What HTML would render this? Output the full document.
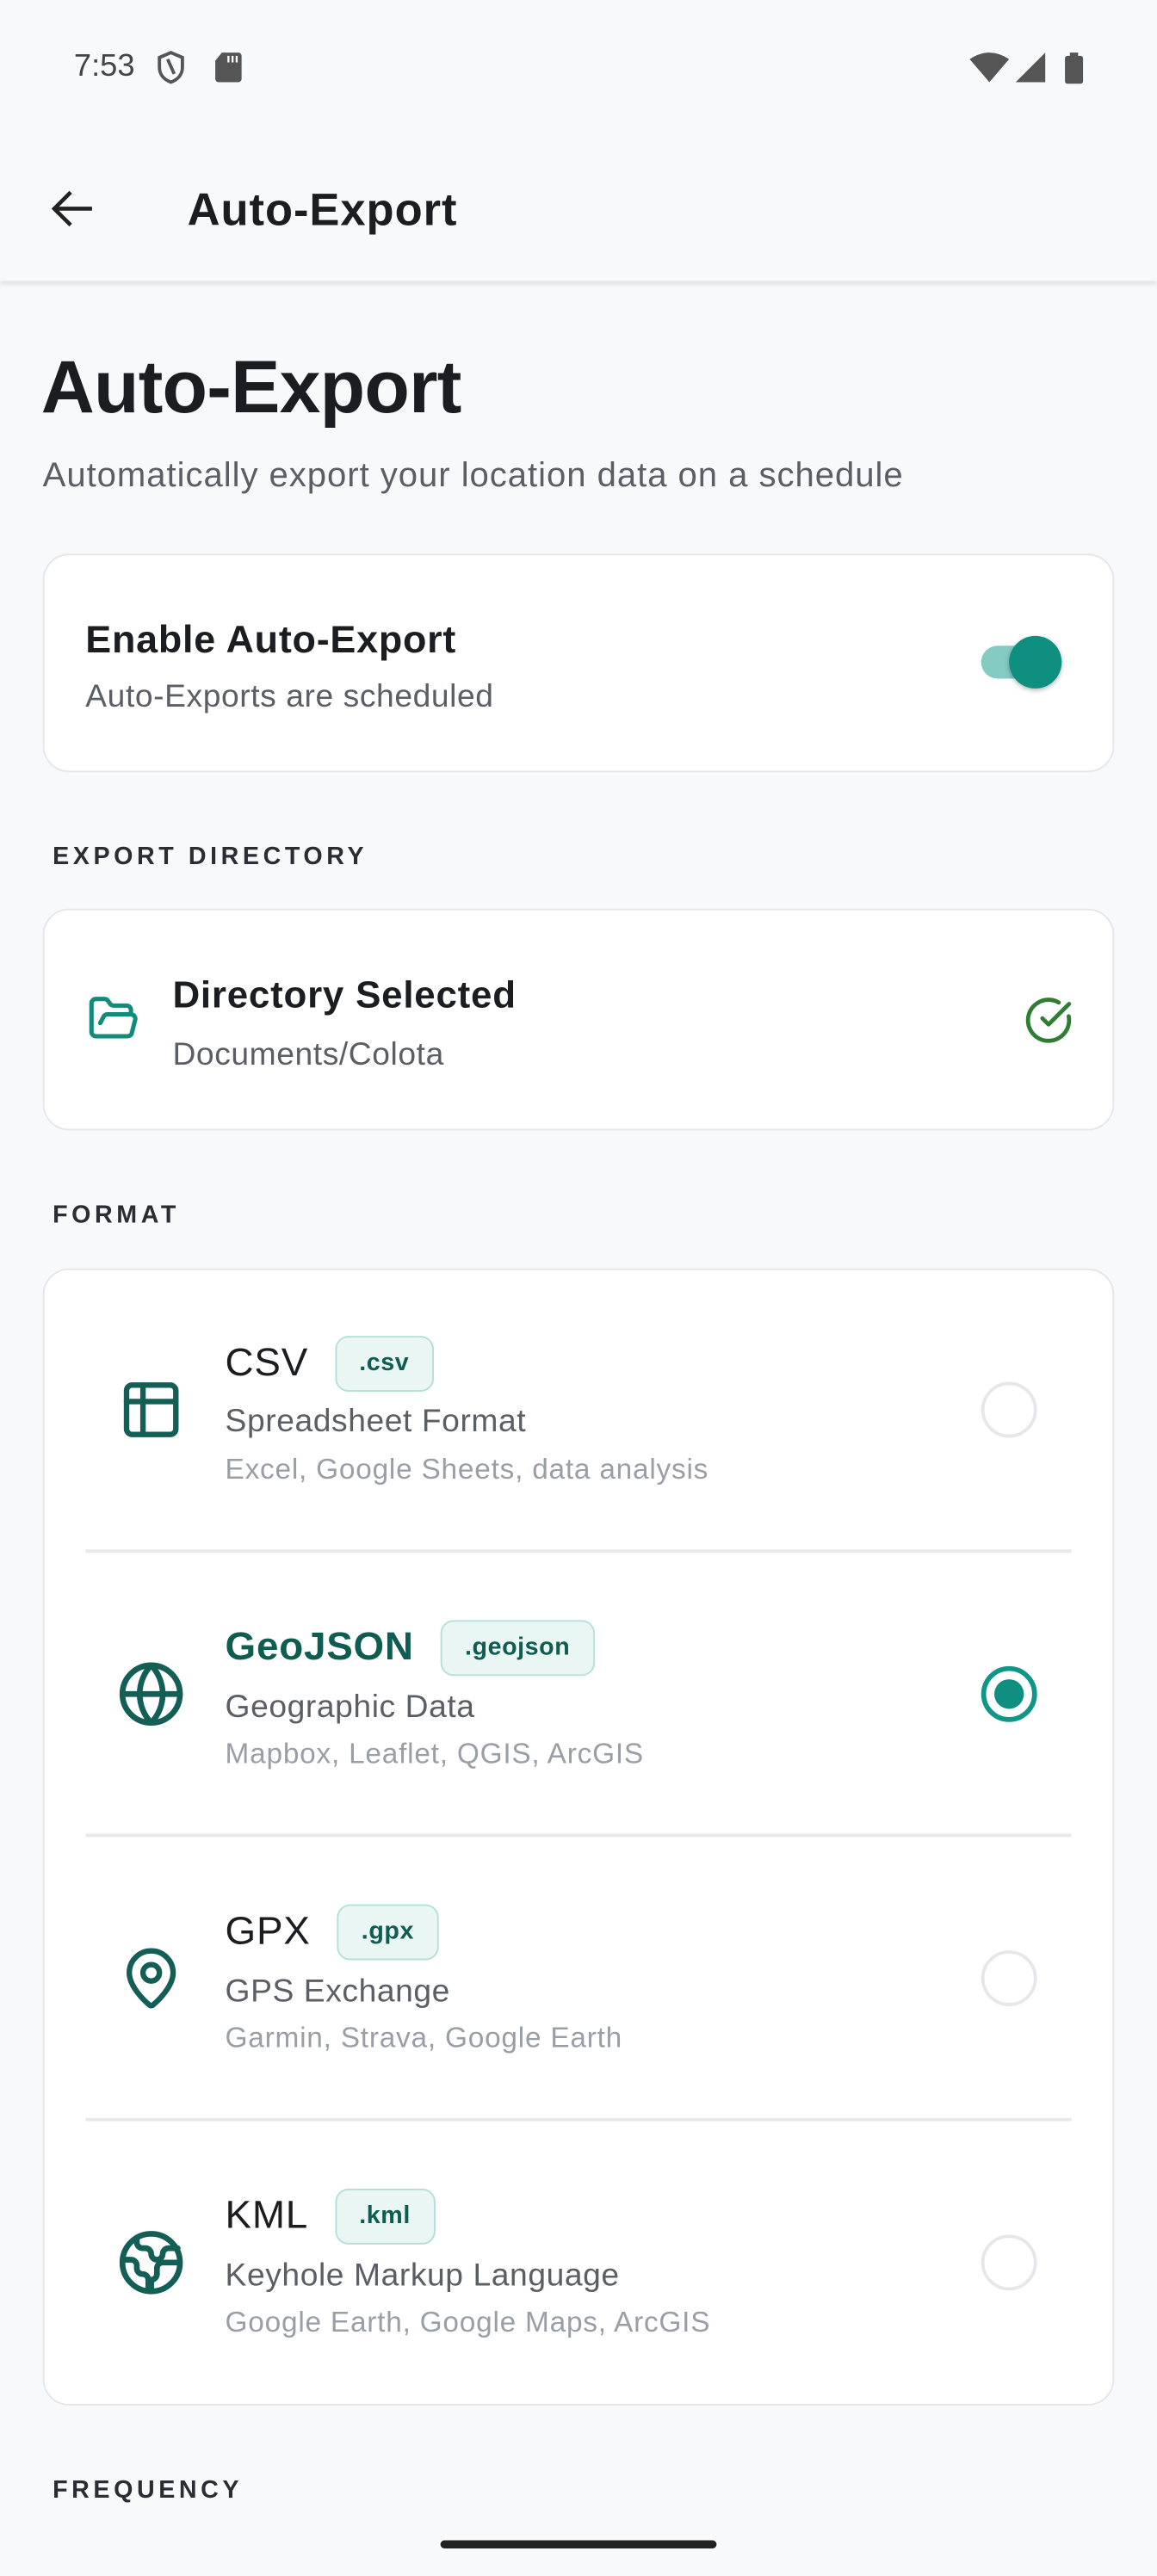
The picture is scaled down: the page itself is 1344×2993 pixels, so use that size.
<!DOCTYPE html>
<html><head><meta charset="utf-8"><style>
html,body{margin:0;padding:0;background:#f8f9fb;}
body{width:1344px;height:2992px;overflow:hidden;font-family:"Liberation Sans",sans-serif;}
#w{position:absolute;left:0;top:0;width:704px;height:1568px;transform:scale(1.909091);transform-origin:0 0;}
.a{position:absolute;white-space:nowrap;}
.card{position:absolute;left:26px;width:652px;background:#fff;border:1.5px solid #e4e6ea;border-radius:16px;box-sizing:border-box;}
.lbl{position:absolute;left:32px;font-size:15px;font-weight:bold;letter-spacing:2.4px;color:#2a2d33;line-height:18px;}
.t{font-size:23px;color:#1c1d21;line-height:28px;letter-spacing:0.4px;}
.s{font-size:19.5px;color:#5b5e65;line-height:24px;letter-spacing:0.3px;}
.x{font-size:17.5px;color:#9a9ea6;line-height:20px;letter-spacing:0.4px;}
.badge{display:inline-block;vertical-align:middle;margin-left:16px;height:32px;line-height:32px;padding:0 14px;background:#e9f6f3;border:1.5px solid #b5e0d8;border-radius:8px;font-size:15px;font-weight:bold;color:#0f5c50;letter-spacing:0.3px;}
.radio{position:absolute;left:597px;width:34px;height:34px;border:2.5px solid #e6e7ea;border-radius:50%;box-sizing:border-box;}
.div{position:absolute;left:52px;width:600px;height:2px;background:#e8e9ec;}
svg.ic{position:absolute;stroke:#135f55;fill:none;stroke-width:2;stroke-linecap:round;stroke-linejoin:round;}
</style></head><body><div id="w">
<div class="a" style="left:45px;top:30px;font-size:19px;color:#444;">7:53</div>
<svg style="position:absolute;left:94px;top:30px" width="20" height="22" viewBox="0 0 20 22"><path d="M10 2 L17 5 V11 C17 15.5 14 18.5 10 20 C6 18.5 3 15.5 3 11 V5 Z" fill="none" stroke="#555" stroke-width="2"/><path d="M8 6 L12 15" stroke="#555" stroke-width="2"/></svg>
<svg style="position:absolute;left:130px;top:31px" width="18" height="20" viewBox="0 0 18 20"><path d="M5 1 H15 A2 2 0 0 1 17 3 V17 A2 2 0 0 1 15 19 H3 A2 2 0 0 1 1 17 V6 Z" fill="#555"/><path d="M9 3 V7 M11.5 3 V7 M14 3 V7" stroke="#fff" stroke-width="1.2"/></svg>
<svg style="position:absolute;left:590px;top:31px" width="72" height="20" viewBox="0 0 72 20"><path d="M0 5 Q12 -3 24 5 L12 19 Z" fill="#555"/><path d="M46 1 V19 H28 Z" fill="#555"/><rect x="58" y="3" width="11" height="17" rx="1.5" fill="#555"/><rect x="61" y="1" width="5" height="3" fill="#555"/></svg>
<div style="position:absolute;left:0;top:84px;width:704px;height:87px;background:#f8f9fb;box-shadow:0 2px 3px rgba(0,0,0,0.1);"></div>
<svg style="position:absolute;left:30px;top:114px" width="28" height="26" viewBox="0 0 28 26"><path d="M26 13 H4 M13 3 L3 13 L13 23" fill="none" stroke="#222" stroke-width="2.4"/></svg>
<div class="a" style="left:114px;top:112px;font-size:27.5px;font-weight:bold;color:#1c1d21;letter-spacing:0.5px;">Auto-Export</div>
<div class="a" style="left:25px;top:210px;font-size:45px;font-weight:bold;color:#1c1d21;letter-spacing:-0.4px;">Auto-Export</div>
<div class="a" style="left:26px;top:278px;font-size:21px;color:#5b5e65;letter-spacing:0.5px;">Automatically export your location data on a schedule</div>

<div class="card" style="top:337px;height:133px;"></div>
<div class="a t" style="left:52px;top:375px;font-weight:bold;font-size:23.5px;">Enable Auto-Export</div>
<div class="a s" style="left:52px;top:412px;">Auto-Exports are scheduled</div>
<div style="position:absolute;left:597px;top:393px;width:42px;height:20px;border-radius:10px;background:#84cbc2;"></div>
<div style="position:absolute;left:614px;top:387px;width:32px;height:32px;border-radius:50%;background:#0e8f80;box-shadow:0 1px 3px rgba(0,0,0,0.3);"></div>

<div class="lbl" style="top:513px;">EXPORT DIRECTORY</div>
<div class="card" style="top:553px;height:135px;"></div>
<svg class="ic" style="left:52px;top:604px;stroke:#148a7b" width="34" height="32" viewBox="0 0 24 24"><path d="m6 14 1.5-2.9A2 2 0 0 1 9.24 10H20a2 2 0 0 1 1.94 2.5l-1.54 6a2 2 0 0 1-1.95 1.5H4a2 2 0 0 1-2-2V5a2 2 0 0 1 2-2h3.9a2 2 0 0 1 1.69.9l.81 1.2a2 2 0 0 0 1.67.9H18a2 2 0 0 1 2 2v2"/></svg>
<div class="a t" style="left:105px;top:591px;font-weight:bold;">Directory Selected</div>
<div class="a s" style="left:105px;top:630px;">Documents/Colota</div>
<svg class="ic" style="left:623px;top:606px;stroke:#2e7d32" width="30" height="30" viewBox="0 0 24 24"><path d="M21.8 10A10 10 0 1 1 17 3.3"/><path d="m9 11 3 3L22 4"/></svg>

<div class="lbl" style="top:731px;">FORMAT</div>
<div class="card" style="top:772px;height:692px;"></div>
<div class="div" style="top:943px"></div>
<div class="div" style="top:1116px"></div>
<div class="div" style="top:1289px"></div>

<svg class="ic" style="left:72px;top:838px" width="40" height="40" viewBox="0 0 24 24"><rect x="3" y="3" width="18" height="18" rx="2"/><path d="M3 9h18M9 3v18"/></svg>
<div class="a t" style="left:137px;top:813px;"><span style="vertical-align:middle;font-size:24px">CSV</span><span class="badge">.csv</span></div>
<div class="a s" style="left:137px;top:853px;">Spreadsheet Format</div>
<div class="a x" style="left:137px;top:884px;">Excel, Google Sheets, data analysis</div>
<div class="radio" style="top:841px"></div>

<svg class="ic" style="left:71px;top:1010px" width="42" height="42" viewBox="0 0 24 24"><circle cx="12" cy="12" r="10"/><path d="M12 2a14.5 14.5 0 0 0 0 20 14.5 14.5 0 0 0 0-20M2 12h20"/></svg>
<div class="a t" style="left:137px;top:986px;"><span style="vertical-align:middle;color:#0f5c50;font-weight:bold;font-size:24px">GeoJSON</span><span class="badge">.geojson</span></div>
<div class="a s" style="left:137px;top:1027px;">Geographic Data</div>
<div class="a x" style="left:137px;top:1057px;">Mapbox, Leaflet, QGIS, ArcGIS</div>
<div class="radio" style="top:1014px;border:3px solid #0f9688"></div>
<div style="position:absolute;left:605px;top:1022px;width:18px;height:18px;border-radius:50%;background:#0f8f80"></div>

<svg class="ic" style="left:72px;top:1183px" width="40" height="42" viewBox="0 0 24 24"><path d="M20 10c0 5-5.5 10.2-7.4 11.8a1 1 0 0 1-1.2 0C9.5 20.2 4 15 4 10a8 8 0 0 1 16 0"/><circle cx="12" cy="10" r="3"/></svg>
<div class="a t" style="left:137px;top:1159px;"><span style="vertical-align:middle;font-size:24px">GPX</span><span class="badge">.gpx</span></div>
<div class="a s" style="left:137px;top:1200px;">GPS Exchange</div>
<div class="a x" style="left:137px;top:1230px;">Garmin, Strava, Google Earth</div>
<div class="radio" style="top:1187px"></div>

<svg class="ic" style="left:71px;top:1356px" width="42" height="42" viewBox="0 0 24 24"><circle cx="12" cy="12" r="10"/><path d="M21.5 12H16c-1.1 0-2 .9-2 2v2c0 1.1-.9 2-2 2v4M7 3.3V5c0 1.1.9 2 2 2h1a2 2 0 0 1 2 2c0 1.1.9 2 2 2 1.1 0 2-.9 2-2 0-1.1.9-2 2-2h3.2M11 21.9V18c0-1.1-.9-2-2-2a2 2 0 0 1-2-2v-1c0-1.1-.9-2-2-2H2.1"/></svg>
<div class="a t" style="left:137px;top:1332px;"><span style="vertical-align:middle;font-size:24px">KML</span><span class="badge">.kml</span></div>
<div class="a s" style="left:137px;top:1373px;">Keyhole Markup Language</div>
<div class="a x" style="left:137px;top:1403px;">Google Earth, Google Maps, ArcGIS</div>
<div class="radio" style="top:1360px"></div>

<div class="lbl" style="top:1507px;">FREQUENCY</div>
<div style="position:absolute;left:268px;top:1546px;width:168px;height:5px;border-radius:3px;background:#222"></div>
</div></body></html>
